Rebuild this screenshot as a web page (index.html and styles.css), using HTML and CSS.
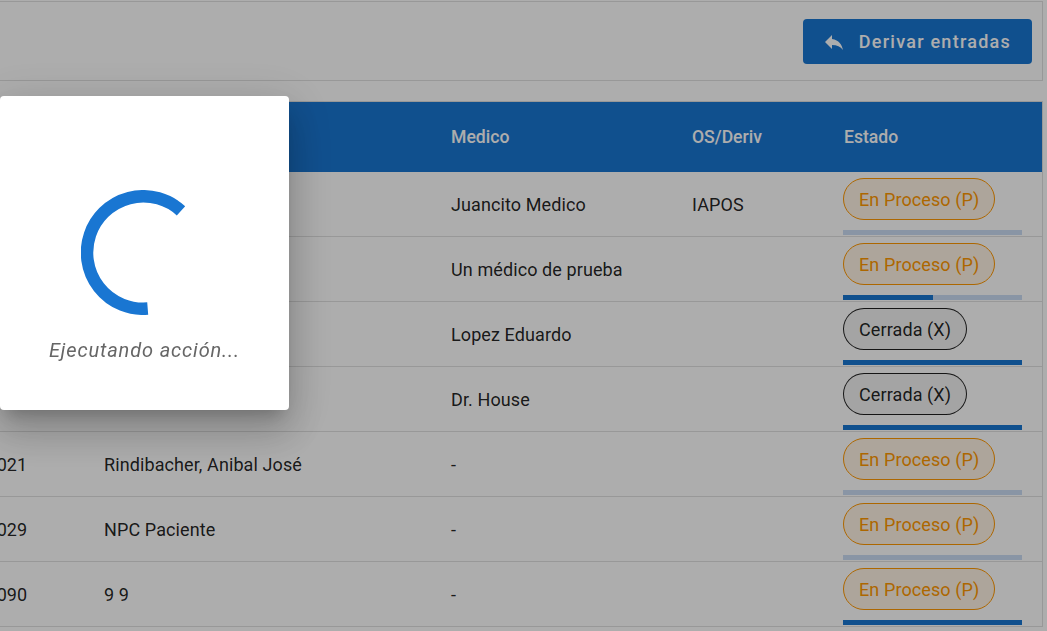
FILE: index.html
```html
<!DOCTYPE html>
<html lang="es">
<head>
<meta charset="utf-8">
<title>Derivar entradas</title>
<link rel="stylesheet" href="styles.css">
</head>
<body>
<main class="page">
  <section class="toolbar">
    <button class="btn" type="button">
      <svg class="btn-icon" viewBox="0 0 24 24" width="24" height="24"><path d="M10 9V5l-7 7 7 7v-4.1c5 0 8.5 1.6 11 5.1-1-5-4-10-11-11z"/></svg>
      <span>Derivar entradas</span>
    </button>
  </section>
  <section class="table">
    <div class="row head">
      <div></div><div></div><div>Medico</div><div>OS/Deriv</div><div class="head-state">Estado</div>
    </div>
    <div class="row">
      <div></div><div></div><div>Juancito Medico</div><div>IAPOS</div>
      <div class="state"><span class="chip proc">En Proceso (P)</span><div class="bar"></div></div>
    </div>
    <div class="row">
      <div></div><div></div><div>Un médico de prueba</div><div></div>
      <div class="state"><span class="chip proc">En Proceso (P)</span><div class="bar"><div class="fill" style="width:50%"></div></div></div>
    </div>
    <div class="row">
      <div></div><div></div><div>Lopez Eduardo</div><div></div>
      <div class="state"><span class="chip closed">Cerrada (X)</span><div class="bar"><div class="fill" style="width:100%"></div></div></div>
    </div>
    <div class="row">
      <div></div><div></div><div>Dr. House</div><div></div>
      <div class="state"><span class="chip closed">Cerrada (X)</span><div class="bar"><div class="fill" style="width:100%"></div></div></div>
    </div>
    <div class="row">
      <div class="num">000021</div><div>Rindibacher, Anibal José</div><div>-</div><div></div>
      <div class="state"><span class="chip proc">En Proceso (P)</span><div class="bar"></div></div>
    </div>
    <div class="row">
      <div class="num">000029</div><div>NPC Paciente</div><div>-</div><div></div>
      <div class="state"><span class="chip proc">En Proceso (P)</span><div class="bar"></div></div>
    </div>
    <div class="row">
      <div class="num">000090</div><div>9 9</div><div>-</div><div></div>
      <div class="state"><span class="chip proc">En Proceso (P)</span><div class="bar"><div class="fill" style="width:100%"></div></div></div>
    </div>
  </section>
</main>
<div class="backdrop">
  <div class="dialog">
    <svg class="spinner" viewBox="0 0 125 125" width="125" height="125"><path d="M66.7 118.6A56.25 56.25 0 1 1 100 20.8"/></svg>
    <p class="msg">Ejecutando acción...</p>
  </div>
</div>
</body>
</html>
```
FILE: styles.css
```css
* { box-sizing: border-box; }
html, body { margin: 0; height: 100%; overflow: hidden; }
body {
  background: #fff;
  color: rgba(0, 0, 0, .87);
  font: 400 18px/20px Roboto, "Liberation Sans", sans-serif;
  letter-spacing: .1px;
}
.page {
  width: 1103px;
  margin-left: -60px;
  padding-top: 1px;
}
.toolbar {
  height: 80px;
  padding: 17px 10px 0 0;
  border: 1px solid #e0e0e0;
  display: flex;
  justify-content: flex-end;
  align-items: flex-start;
}
.btn {
  display: flex;
  align-items: center;
  gap: 13px;
  height: 45px;
  padding: 0 21px 0 19px;
  border: 0;
  border-radius: 4px;
  background: #1976d2;
  color: #fff;
  font: 500 18px/20px Roboto, "Liberation Sans", sans-serif;
  letter-spacing: 1.25px;
}
.btn-icon { fill: #fff; display: block; }
.table {
  margin-top: 20px;
  border-top: 1px solid #e0e0e0;
  border-right: 1px solid #e0e0e0;
}
.row {
  display: grid;
  grid-template-columns: 164px 347px 241px 151px 199px;
  align-items: center;
  height: 65px;
  padding-top: 2px;
  border-bottom: 1px solid #e0e0e0;
}
.head {
  height: 70px;
  padding-top: 0;
  border-bottom: 0;
  background: #1976d2;
  color: #fff;
  font-size: 17.6px;
  font-weight: 500;
  letter-spacing: 0;
}
.head-state { padding-left: 1px; }
.num { padding-left: 26px; }
.state { align-self: start; padding-top: 4px; }
.chip {
  display: inline-block;
  height: 42px;
  padding: 0 15px;
  border: 1px solid;
  border-radius: 21px;
  line-height: 42px;
  vertical-align: top;
}
.proc {
  color: #ff9800;
  border-color: #ff9800;
  background: rgba(255, 152, 0, .1);
}
.closed {
  color: rgba(0, 0, 0, .87);
  border-color: rgba(0, 0, 0, .87);
  background: #f2f2f2;
}
.bar {
  width: 179px;
  height: 5px;
  margin-top: 10px;
  background: #cbdcf3;
}
.fill { height: 100%; background: #1976d2; }
.backdrop {
  position: fixed;
  inset: 0;
  padding-top: 96px;
  background: rgba(0, 0, 0, .32);
}
.dialog {
  width: 289px;
  height: 314px;
  padding-top: 94px;
  display: flex;
  flex-direction: column;
  align-items: center;
  border-radius: 4px;
  background: #fff;
  box-shadow: 0 11px 15px -7px rgba(0, 0, 0, .2), 0 24px 38px 3px rgba(0, 0, 0, .14), 0 9px 46px 8px rgba(0, 0, 0, .12);
}
.spinner { display: block; flex: none; margin-left: -2px; }
.spinner path { fill: none; stroke: #1976d2; stroke-width: 12.5; }
.msg {
  margin: 25px 0 0;
  color: #666;
  font-style: italic;
  font-size: 20px;
  line-height: 20px;
  letter-spacing: .85px;
  white-space: nowrap;
}
```
